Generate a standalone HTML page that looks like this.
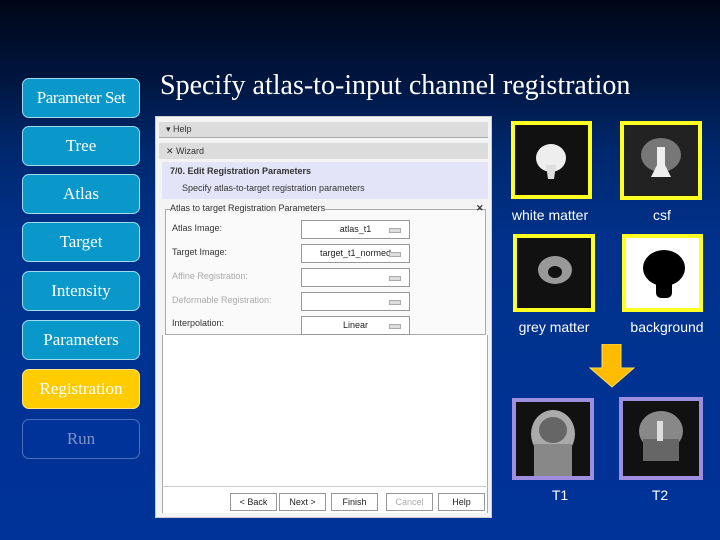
<!DOCTYPE html>
<html><head><style>
*{margin:0;padding:0;box-sizing:border-box}
body{width:720px;height:540px;overflow:hidden;position:relative;font-family:"Liberation Sans",sans-serif;
background:linear-gradient(180deg,#000616 0%,#001640 15%,#00286e 28%,#00318c 45%,#003399 100%);}
.b{position:absolute;left:22px;width:118px;height:40px;border:1px solid #9fdcf0;border-radius:7px;background:#0a97c9;color:#fff;
font-family:"Liberation Serif",serif;font-size:17px;text-align:center;line-height:38px;white-space:nowrap}
.title{position:absolute;left:160px;top:70px;color:#fff;font-family:"Liberation Serif",serif;font-size:28px;white-space:nowrap}
.win{position:absolute;left:155px;top:116px;width:337px;height:402px;background:#f4f4f4;border:1px solid #ccc}
.t{position:absolute;font-size:9px;color:#333;white-space:nowrap}
.fld{position:absolute;left:145px;width:109px;height:19px;background:#fff;border:1px solid #999;font-size:9px;text-align:center;line-height:17px;color:#222}
.fld:after{content:"";position:absolute;right:8px;top:7px;width:10px;height:3px;border:1px solid #aaa;background:#ddd}
.btn{position:absolute;top:376px;width:47px;height:18px;border:1px solid #999;background:#fff;font-size:9px;text-align:center;line-height:16px;color:#222}
.im{position:absolute;background:#111;border:4px solid #ffff22}
.lb{position:absolute;color:#fff;font-size:14px;white-space:nowrap;text-align:center}
</style></head><body>
<div class="title">Specify atlas-to-input channel registration</div>
<div class="b" style="top:78px;letter-spacing:-0.5px">Parameter Set</div>
<div class="b" style="top:126px">Tree</div>
<div class="b" style="top:174px">Atlas</div>
<div class="b" style="top:222px">Target</div>
<div class="b" style="top:271px">Intensity</div>
<div class="b" style="top:320px">Parameters</div>
<div class="b" style="top:369px;background:#ffcc00;border-color:#ffe680">Registration</div>
<div class="b" style="top:419px;background:#003399;border-color:#4a70c0;color:#7f93c0">Run</div>

<div class="win">
 <div style="position:absolute;left:3px;top:5px;width:329px;height:16px;background:#dcdcdc;border-bottom:1px solid #aaa"></div>
 <div class="t" style="left:10px;top:7px">▾ Help</div>
 <div style="position:absolute;left:3px;top:26px;width:329px;height:16px;background:#dcdcdc"></div>
 <div class="t" style="left:10px;top:29px">✕ Wizard</div>
 <div style="position:absolute;left:6px;top:45px;width:326px;height:37px;background:#e4e4f8"></div>
 <div class="t" style="left:14px;top:49px;font-weight:bold">7/0. Edit Registration Parameters</div>
 <div class="t" style="left:26px;top:66px">Specify atlas-to-target registration parameters</div>
 <div style="position:absolute;left:9px;top:92px;width:321px;height:126px;border:1px solid #aaa;background:#fafafa"></div>
 <div class="t" style="left:14px;top:86px;background:#f4f4f4">Atlas to target Registration Parameters</div>
 <div class="t" style="left:320px;top:86px;font-weight:bold">✕</div>
 <div class="t" style="left:16px;top:106px">Atlas Image:</div>
 <div class="fld" style="top:103px">atlas_t1</div>
 <div class="t" style="left:16px;top:130px">Target Image:</div>
 <div class="fld" style="top:127px">target_t1_normed</div>
 <div class="t" style="left:16px;top:154px;color:#aaa">Affine Registration:</div>
 <div class="fld" style="top:151px"></div>
 <div class="t" style="left:16px;top:178px;color:#aaa">Deformable Registration:</div>
 <div class="fld" style="top:175px"></div>
 <div class="t" style="left:16px;top:201px">Interpolation:</div>
 <div class="fld" style="top:199px">Linear</div>
 <div style="position:absolute;left:6px;top:218px;width:326px;height:178px;background:#fff;border-left:1px solid #aaa;border-right:1px solid #aaa"></div>
 <div style="position:absolute;left:6px;top:369px;width:326px;border-top:1px solid #ccc"></div>
 <div class="btn" style="left:74px">&lt; Back</div>
 <div class="btn" style="left:123px">Next &gt;</div>
 <div class="btn" style="left:175px">Finish</div>
 <div class="btn" style="left:230px;color:#aaa">Cancel</div>
 <div class="btn" style="left:282px">Help</div>
</div>

<div class="im" style="left:511px;top:121px;width:81px;height:78px"><svg width="73" height="70"><ellipse cx="36" cy="33" rx="15" ry="14" fill="#eee"/><path d="M31 40h10l-2 14h-6z" fill="#ddd"/></svg></div>
<div class="im" style="left:620px;top:121px;width:82px;height:79px;background:#222"><svg width="74" height="71"><ellipse cx="37" cy="30" rx="20" ry="17" fill="#777"/><path d="M33 22h8v18l6 12h-20l6-12z" fill="#eee"/></svg></div>
<div class="im" style="left:513px;top:234px;width:82px;height:78px"><svg width="74" height="70"><ellipse cx="38" cy="32" rx="17" ry="14" fill="#999"/><ellipse cx="38" cy="34" rx="7" ry="6" fill="#111"/></svg></div>
<div class="im" style="left:622px;top:234px;width:81px;height:78px;background:#fff"><svg width="73" height="70"><ellipse cx="38" cy="30" rx="21" ry="18" fill="#000"/><rect x="30" y="40" width="16" height="20" rx="5" fill="#000"/></svg></div>
<div class="lb" style="left:500px;top:207px;width:100px">white matter</div>
<div class="lb" style="left:612px;top:207px;width:100px">csf</div>
<div class="lb" style="left:504px;top:319px;width:100px">grey matter</div>
<div class="lb" style="left:617px;top:319px;width:100px">background</div>
<svg style="position:absolute;left:589px;top:344px" width="46" height="44"><path d="M13 0h19v24h13l-22 19l-22-19h12z" fill="#ffbb00" stroke="#ffdd55" stroke-width="1"/></svg>
<div class="im" style="left:512px;top:398px;width:82px;height:82px;border-color:#9d8ee0"><svg width="74" height="74"><ellipse cx="37" cy="32" rx="22" ry="24" fill="#aaa"/><rect x="18" y="42" width="38" height="32" fill="#888"/><ellipse cx="37" cy="28" rx="14" ry="13" fill="#666"/></svg></div>
<div class="im" style="left:619px;top:397px;width:84px;height:83px;border-color:#9d8ee0"><svg width="76" height="75"><ellipse cx="38" cy="30" rx="22" ry="20" fill="#888"/><rect x="20" y="38" width="36" height="22" fill="#666"/><path d="M34 20h6v20h-6z" fill="#ddd"/></svg></div>
<div class="lb" style="left:510px;top:487px;width:100px">T1</div>
<div class="lb" style="left:610px;top:487px;width:100px">T2</div>
</body></html>
